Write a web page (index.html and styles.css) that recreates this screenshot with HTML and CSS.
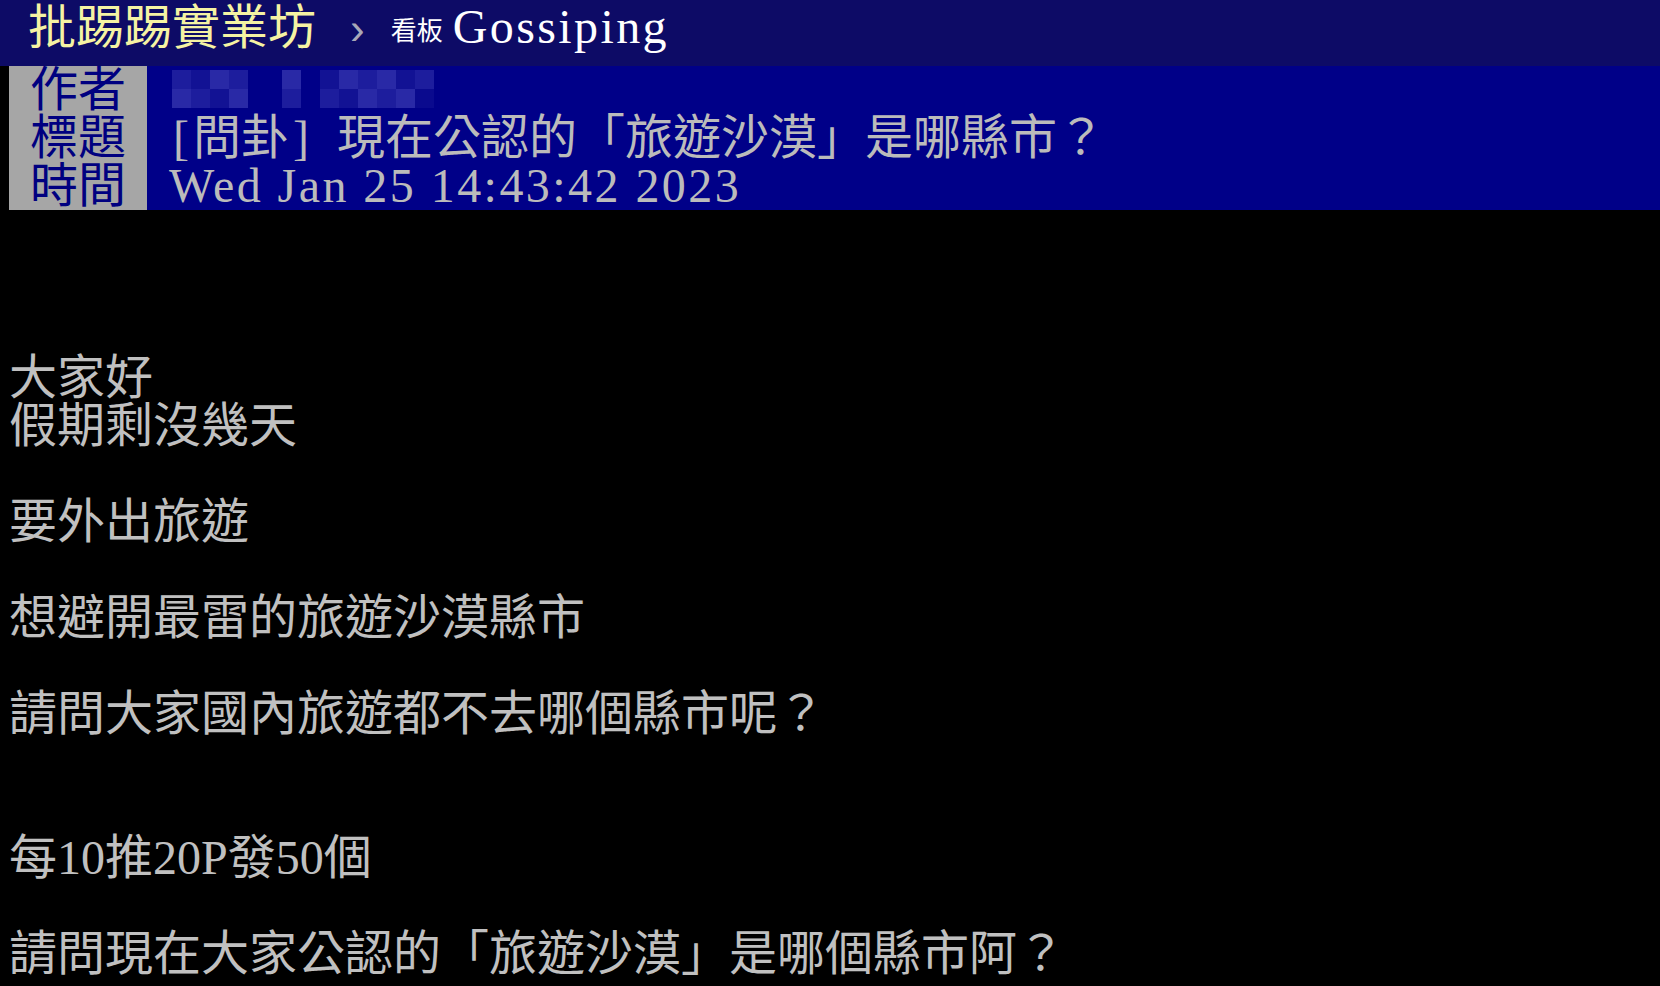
FILE: index.html
```html
<!DOCTYPE html>
<html lang="zh-Hant">
<head>
<meta charset="utf-8">
<title>[問卦] 現在公認的「旅遊沙漠」是哪縣市？ - 看板 Gossiping - 批踢踢實業坊</title>
<link rel="stylesheet" href="styles.css">
</head>
<body>
<div class="topbar">
  <span class="logo">批踢踢實業坊</span>
  <span class="sep">›</span>
  <span class="board-label">看板</span>
  <span class="board">Gossiping</span>
</div>
<div class="main">
  <div class="meta">
    <div class="meta-row">
      <span class="tag">作者</span>
      <span class="value">
        <span class="mosaic">
          <span class="mgrp g1">
            <i class="m2"></i><i class="m1"></i><i class="m3"></i><i class="m2"></i>
            <i class="m3"></i><i class="m2"></i><i class="m1"></i><i class="m3"></i>
          </span>
          <span class="mgrp g2">
            <i class="m3"></i>
            <i class="m2"></i>
          </span>
          <span class="mgrp g3">
            <i class="m1"></i><i class="m3"></i><i class="m2"></i><i class="m3"></i><i class="m1"></i><i class="m2"></i>
            <i class="m2"></i><i class="m1"></i><i class="m3"></i><i class="m2"></i><i class="m3"></i><i class="m0"></i>
          </span>
        </span>
      </span>
    </div>
    <div class="meta-row">
      <span class="tag">標題</span>
      <span class="value"><span class="hw">[</span>問卦<span class="hw">]</span><span class="hw"> </span>現在公認的「旅遊沙漠」是哪縣市？</span>
    </div>
    <div class="meta-row">
      <span class="tag">時間</span>
      <span class="value date">Wed Jan 25 14:43:42 2023</span>
    </div>
  </div>
  <div class="content">
    <div class="line"></div>
    <div class="line"></div>
    <div class="line"></div>
    <div class="line">大家好</div>
    <div class="line">假期剩沒幾天</div>
    <div class="line"></div>
    <div class="line">要外出旅遊</div>
    <div class="line"></div>
    <div class="line">想避開最雷的旅遊沙漠縣市</div>
    <div class="line"></div>
    <div class="line">請問大家國內旅遊都不去哪個縣市呢？</div>
    <div class="line"></div>
    <div class="line"></div>
    <div class="line">每10推20P發50個</div>
    <div class="line"></div>
    <div class="line">請問現在大家公認的「旅遊沙漠」是哪個縣市阿？</div>
  </div>
</div>
</body>
</html>
```

FILE: styles.css
```css
* {
  box-sizing: border-box;
}

html,
body {
  margin: 0;
  background: #000;
}

body {
  width: 1660px;
  height: 986px;
  overflow: hidden;
}

/* ---------- top bar ---------- */
.topbar {
  display: flex;
  align-items: flex-start;
  height: 66px;
  padding-left: 28px;
  background: #0d0b66;
  font-family: "Liberation Serif", "Noto Sans CJK TC", serif;
}

.logo {
  font-size: 48px;
  line-height: 56px;
  color: #f5f3a3;
}

.sep {
  font-family: "Liberation Sans", sans-serif;
  font-size: 44px;
  line-height: 44px;
  margin: 7px 0 0 34px;
  color: #a8a8b8;
}

.board-label {
  font-size: 26px;
  line-height: 26px;
  margin: 19px 0 0 26px;
  color: #ffffff;
}

.board {
  font-size: 48px;
  line-height: 54px;
  letter-spacing: 2.4px;
  margin-left: 10px;
  color: #ffffff;
}

/* ---------- article ---------- */
.main {
  padding-left: 9px;
  font-family: "Liberation Serif", "Noto Sans CJK TC", serif;
  font-size: 48px;
  line-height: 48px;
}

.meta-row {
  display: flex;
  height: 48px;
}

.tag {
  flex: none;
  width: 138px;
  text-align: center;
  background: #a6a6a6;
  color: #000080;
}

.value {
  flex: 1;
  padding-left: 22px;
  background: #000088;
  color: #bbbbbb;
  white-space: nowrap;
}

.hw {
  display: inline-block;
  width: 24px;
  text-align: center;
}

.date {
  letter-spacing: 2.45px;
}

/* blurred author */
.mosaic {
  display: flex;
  margin: 4px 0 0 3px;
}

.mgrp {
  display: grid;
  grid-auto-rows: 19px;
}

.mgrp i {
  display: block;
}

.g1 {
  grid-template-columns: repeat(4, 19px);
}

.g2 {
  grid-template-columns: 19px;
  margin-left: 34px;
}

.g3 {
  grid-template-columns: repeat(6, 19px);
  margin-left: 19px;
}

.m0 { background: #0a0a8e; }
.m1 { background: #121294; }
.m2 { background: #1d1d9d; }
.m3 { background: #2929a6; }

.content {
  color: #c0c0c0;
}

.line {
  height: 48px;
  white-space: pre;
}
```
